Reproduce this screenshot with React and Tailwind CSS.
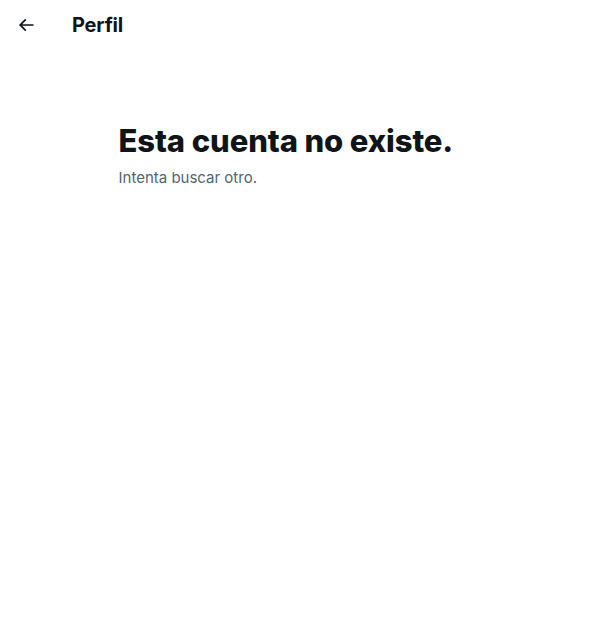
import React from "react";

export default function App() {
  return (
    <div
      className="min-h-screen w-full bg-white text-[#0f1419]"
      style={{ fontFamily: "Inter, 'Noto Sans', sans-serif" }}
    >
      {/* Top bar */}
      <header className="flex h-[50px] items-center px-4">
        <div className="flex w-[56px] items-center">
          <svg viewBox="0 0 24 24" className="h-5 w-5" fill="#0f1419">
            <path d="M7.414 13l5.043 5.04-1.414 1.42L3.586 12l7.457-7.46 1.414 1.42L7.414 11H21v2H7.414z" />
          </svg>
        </div>
        <h2 className="text-[20px] font-bold leading-6 tracking-[-0.2px]">Perfil</h2>
      </header>

      {/* Empty state */}
      <div className="mx-auto mt-[73px] w-[400px] px-5">
        <div className="text-[31px] font-extrabold leading-9 tracking-[-0.1px]">
          Esta cuenta no existe.
        </div>
        <p className="mt-[9px] text-[15px] leading-5 text-[#536471]">
          Intenta buscar otro.
        </p>
      </div>
    </div>
  );
}
